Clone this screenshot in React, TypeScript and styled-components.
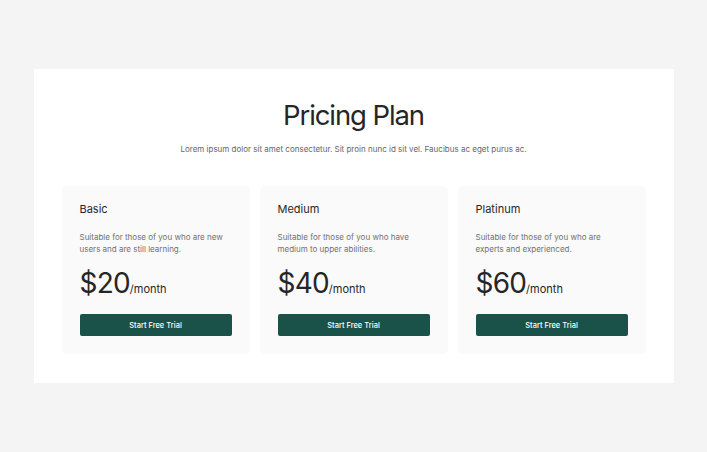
import styled, { createGlobalStyle } from 'styled-components'

const GlobalStyle = createGlobalStyle`
  html, body {
    margin: 0;
    padding: 0;
    background: #f4f4f4;
    font-family: Inter, "Noto Sans", sans-serif;
  }
`

const plans = [
  { name: 'Basic', desc: 'Suitable for those of you who are new users and are still learning.', price: 20 },
  { name: 'Medium', desc: 'Suitable for those of you who have medium to upper abilities.', price: 40 },
  { name: 'Platinum', desc: 'Suitable for those of you who are experts and experienced.', price: 60 },
]

const App = () => {
  return (
    <Page>
      <GlobalStyle />
      <Panel>
        <Title>Pricing Plan</Title>
        <Subtitle>Lorem ipsum dolor sit amet consectetur. Sit proin nunc id sit vel. Faucibus ac eget purus ac.</Subtitle>
        <Cards>
          {plans.map((plan) => (
            <Card key={plan.name}>
              <PlanName>{plan.name}</PlanName>
              <Desc>{plan.desc}</Desc>
              <Price>
                ${plan.price}<Per>/month</Per>
              </Price>
              <Button>Start Free Trial</Button>
            </Card>
          ))}
        </Cards>
      </Panel>
    </Page>
  )
}

const Page = styled.div`
  width: 707px;
  height: 452px;
  padding-top: 69px;
  box-sizing: border-box;
  display: flex;
  justify-content: center;
`

const Panel = styled.div`
  width: 640px;
  height: 314px;
  box-sizing: border-box;
  background: #ffffff;
  padding: 27px 28px 29px;
  display: flex;
  flex-direction: column;
  align-items: center;
`

const Title = styled.h1`
  margin: 0;
  font-size: 27.5px;
  font-weight: 400;
  line-height: 38px;
  color: #262626;
  letter-spacing: -1.1px;
`

const Subtitle = styled.p`
  margin: 10px 0 0;
  font-size: 8px;
  line-height: 10px;
  color: #666666;
`

const Cards = styled.div`
  margin-top: 32px;
  width: 100%;
  display: grid;
  grid-template-columns: repeat(3, 1fr);
  gap: 10px;
`

const Card = styled.div`
  background: #fafafa;
  border-radius: 5px;
  padding: 16px 18px 18px;
  height: 168px;
  box-sizing: border-box;
  display: flex;
  flex-direction: column;
`

const PlanName = styled.h3`
  margin: 0;
  font-size: 11px;
  font-weight: 400;
  line-height: 14px;
  color: #262626;
`

const Desc = styled.p`
  margin: 16px 0 0;
  font-size: 8px;
  line-height: 11.5px;
  color: #717171;
  padding-right: 8px;
`

const Price = styled.div`
  margin-top: 11px;
  font-size: 28px;
  line-height: 34px;
  color: #262626;
  letter-spacing: -0.8px;
`

const Per = styled.span`
  font-size: 11px;
  letter-spacing: 0;
`

const Button = styled.button`
  margin-top: 8px;
  height: 22px;
  width: 100%;
  border: none;
  border-radius: 2px;
  background: #1a5249;
  color: #ffffff;
  font-family: Inter, "Noto Sans", sans-serif;
  font-size: 7.5px;
  font-weight: 500;
  cursor: pointer;
`

export default App
